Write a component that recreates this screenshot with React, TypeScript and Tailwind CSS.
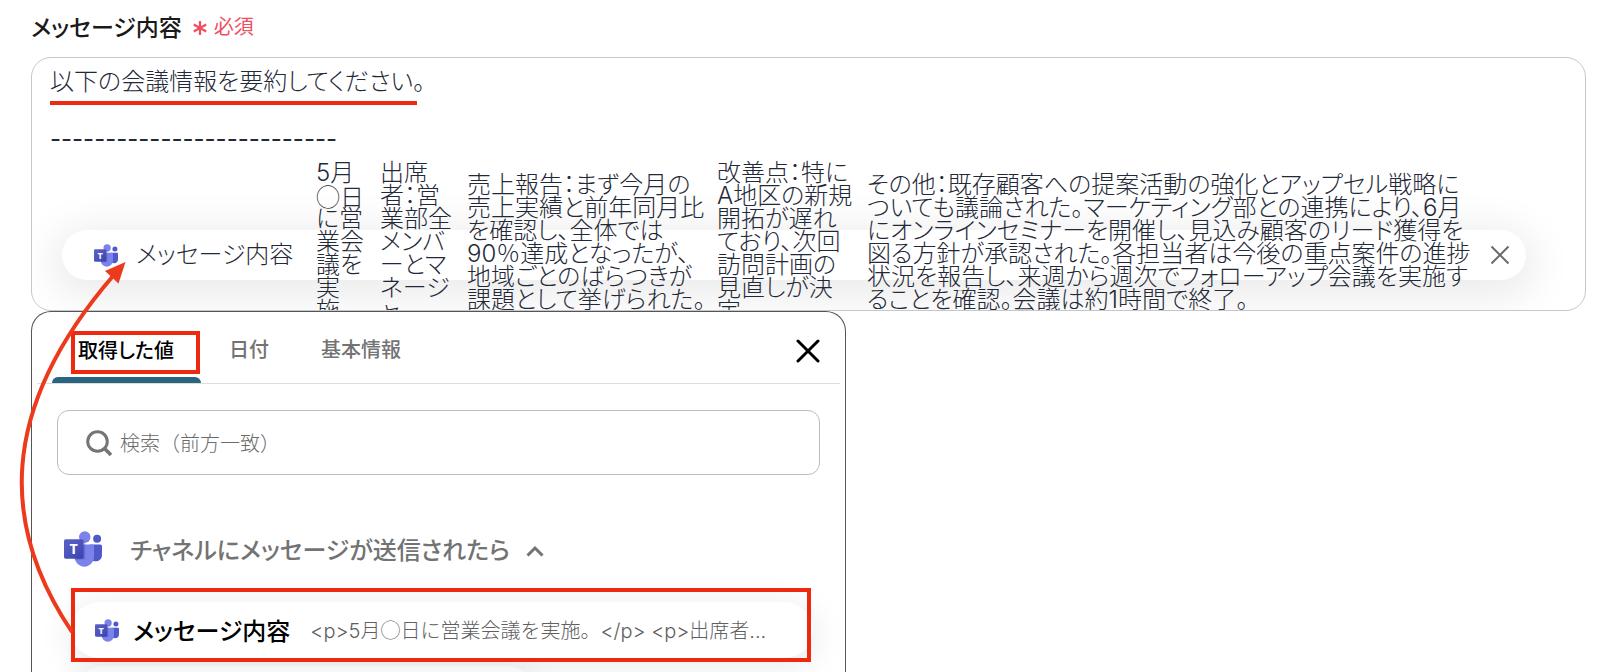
import React from "react";

function TeamsLogo({ className }: { className: string }) {
  return (
    <svg viewBox="0 0 2229 2074" className={className} aria-hidden="true">
      <defs>
        <linearGradient id="teams-tile" x1="0" y1="0" x2="1" y2="1">
          <stop offset="0" stopColor="#5a62c3" />
          <stop offset="0.5" stopColor="#4d55bd" />
          <stop offset="1" stopColor="#3940ab" />
        </linearGradient>
      </defs>
      <path
        fill="#5059c9"
        d="M1554.637 777.5h575.713c54.391 0 98.483 44.092 98.483 98.483v524.398c0 199.901-162.051 361.952-361.952 361.952h-1.711c-199.901.028-361.975-162-362.004-361.901V828.971c0-28.427 23.044-51.471 51.471-51.471z"
      />
      <circle cx="1943.75" cy="440.583" r="233.25" fill="#5059c9" />
      <circle cx="1218.083" cy="336.917" r="336.917" fill="#7b83eb" />
      <path
        fill="#7b83eb"
        d="M1667.323 777.5H717.01c-53.743 1.33-96.257 45.931-95.01 99.676v598.105c-7.505 322.519 247.657 590.16 570.167 598.053 322.51-7.893 577.671-275.534 570.167-598.053V877.176c1.245-53.745-41.268-98.346-95.011-99.676z"
      />
      <path
        fill="#3b42a0"
        opacity="0.35"
        d="M622 560h530a90 90 0 0 1 90 90v910a90 90 0 0 1-90 90H640z"
      />
      <rect y="466.5" width="1140" height="1140" rx="95" fill="url(#teams-tile)" />
      <text
        x="570"
        y="1320"
        textAnchor="middle"
        fill="#ffffff"
        fontSize="840"
        fontWeight="700"
        fontFamily="Open Sans, sans-serif"
      >
        T
      </text>
    </svg>
  );
}

/* Inter's large circle is wider than a kanji, so this one glyph uses the CJK face. */
function Circle() {
  return <span className="font-['Noto_Sans_CJK_JP',sans-serif]">◯</span>;
}

const columns = [
  { size: "h-[188px] w-[46px]", lines: ["5月", "◯日", "に営", "業会", "議を", "実", "施"] },
  { size: "h-[188px] w-[69px]", lines: ["出席", "者：営", "業部全", "メンバ", "ーとマ", "ネージ", "ャ"] },
  {
    size: "h-[165px] w-[232px]",
    lines: [
      "売上報告：まず今月の",
      "売上実績と前年同月比",
      "を確認し、全体では",
      "90％達成となったが、",
      "地域ごとのばらつきが",
      "課題として挙げられた。",
    ],
  },
  {
    size: "h-[188px] w-[132px]",
    lines: ["改善点：特に", "A地区の新規", "開拓が遅れ", "ており、次回", "訪問計画の", "見直しが決", "定"],
  },
  {
    size: "h-[165px] w-[592px]",
    lines: [
      "その他：既存顧客への提案活動の強化とアップセル戦略に",
      "ついても議論された。マーケティング部との連携により、6月",
      "にオンラインセミナーを開催し、見込み顧客のリード獲得を",
      "図る方針が承認された。各担当者は今後の重点案件の進捗",
      "状況を報告し、来週から週次でフォローアップ会議を実施す",
      "ることを確認。会議は約1時間で終了。",
    ],
  },
];

function MessageEditor() {
  return (
    <div
      role="textbox"
      aria-multiline="true"
      aria-labelledby="message-label"
      className="mr-3.5 ml-[31px] h-[254px] shrink-0 overflow-hidden rounded-[20px] border border-[#c3c8ce] pl-[18px] font-[Inter,'Noto_Sans_CJK_JP',sans-serif] text-2xl font-light text-[#1f2937] [font-feature-settings:'palt']"
    >
      <p className="mt-1.5 h-[41px] w-[367px] border-b-4 border-[#ed2a10] leading-[36px] whitespace-nowrap">
        以下の会議情報を要約してください。
      </p>
      <p className="mt-5 leading-[28px] font-normal">--------------------------</p>
      <div className="mt-[77px] ml-3 flex h-[50px] w-[1464px] items-center rounded-full bg-white px-8 shadow-[0_8px_40px_10px_rgba(0,0,0,0.08)]">
        <TeamsLogo className="h-[23px] w-6 shrink-0" />
        <span className="ml-[18px] w-[180px] shrink-0 whitespace-nowrap">メッセージ内容</span>
        <div className="flex items-center gap-[18px] leading-[23px] whitespace-nowrap">
          {columns.map((column) => (
            <div key={column.lines[0]} className={column.size}>
              {column.lines.map((line) => (
                <p key={line} className="h-[23px]">
                  {line.startsWith("◯") && <Circle />}
                  {line.replace("◯", "")}
                </p>
              ))}
            </div>
          ))}
        </div>
        <button type="button" aria-label="削除" className="ml-auto -mr-4 shrink-0 text-[#6b6b6b]">
          <svg viewBox="0 0 20 20" className="size-5" fill="none" stroke="currentColor" strokeWidth="2">
            <path d="M1.500 1.500l17 17M18.500 1.500l-17 17" />
          </svg>
        </button>
      </div>
    </div>
  );
}

function ValuePicker() {
  return (
    <section className="ml-[31px] w-[815px] max-w-full flex-1 overflow-hidden rounded-t-[20px] border border-b-0 border-[#555555] bg-white">
      <div className="mx-[5px] flex h-[72px] items-center border-b border-[#dddddd] text-xl font-medium text-[#737373]">
        <div role="tablist" className="ml-[15px] flex h-full items-start">
          <button
            type="button"
            role="tab"
            aria-selected="true"
            className="flex h-[71px] w-[149px] flex-col justify-between text-black"
          >
            <span className="mt-[19px] ml-[19px] flex h-[43px] w-[129px] items-center border-4 border-[#ed2a10] pb-1.5 pl-[3px] leading-6 whitespace-nowrap [font-feature-settings:'palt']">
              取得した値
            </span>
            <span className="h-1.5 w-full rounded-t-md bg-[#2a657f]" />
          </button>
          <button type="button" role="tab" className="mt-[25px] ml-7 leading-6 [font-feature-settings:'palt']">
            日付
          </button>
          <button type="button" role="tab" className="mt-[25px] ml-[52px] leading-6 [font-feature-settings:'palt']">
            基本情報
          </button>
        </div>
        <button type="button" aria-label="閉じる" className="mt-1.5 mr-5 ml-auto text-black">
          <svg viewBox="0 0 24 24" className="size-6" fill="none" stroke="currentColor" strokeWidth="3" strokeLinecap="round">
            <path d="M2 2l20 20M22 2L2 22" />
          </svg>
        </button>
      </div>

      <label className="mx-[25px] mt-[26px] flex h-[65px] items-center rounded-xl border border-[#bcbcbc] px-7 text-[#757575]">
        <svg viewBox="0 0 26 26" className="size-[26px] shrink-0" fill="none" stroke="currentColor" strokeWidth="3">
          <circle cx="11.500" cy="11.500" r="9.800" />
          <path d="M18.500 18.500l6.500 6.500" strokeWidth="3.500" />
        </svg>
        <input
          type="search"
          aria-label="検索"
          placeholder="検索（前方一致）"
          className="ml-2 w-full text-xl font-light outline-none placeholder:text-[#6b6b6b]"
        />
      </label>

      <button type="button" className="mt-[53px] ml-8 flex h-[42px] items-center text-2xl font-medium text-[#737373]">
        <TeamsLogo className="h-9 w-[38px]" />
        <span className="ml-7 [font-feature-settings:'palt']">チャネルにメッセージが送信されたら</span>
        <svg viewBox="0 0 18 12" className="mt-1 ml-4 h-3 w-[18px]" fill="none" stroke="currentColor" strokeWidth="3">
          <path d="M1.500 10.500L9 3l7.500 7.500" />
        </svg>
      </button>

      <div className="relative mt-8 mr-8 ml-[39px]">
        <button
          type="button"
          className="flex h-14 w-full items-center rounded-full bg-white pl-6 shadow-[0_6px_32px_4px_rgba(0,0,0,0.08)]"
        >
          <TeamsLogo className="h-[23px] w-6 shrink-0" />
          <span className="ml-3.5 text-2xl font-medium text-black [font-feature-settings:'palt']">
            メッセージ内容
          </span>
          <span className="ml-5 font-[Inter,'Noto_Sans_CJK_JP',sans-serif] text-xl font-light whitespace-nowrap text-[#606060]">
            &lt;p&gt;5月
            <Circle />
            日に営業会議を実施。&lt;/p&gt; &lt;p&gt;出席者...
          </span>
        </button>
        <div className="pointer-events-none absolute -top-3.5 right-0.5 -bottom-1 left-0 border-4 border-[#ed2a10]" />
      </div>
      <div className="mt-2 ml-[43px] h-14 w-[460px] rounded-full bg-white shadow-[0_6px_32px_4px_rgba(0,0,0,0.08)]" />
    </section>
  );
}

function PointerArrow() {
  return (
    <svg className="pointer-events-none absolute top-0 left-0 h-[672px] w-40" viewBox="0 0 160 672" aria-hidden="true">
      <path d="M72 632C2 528-4 412 113 276" fill="none" stroke="#ed3a1c" strokeWidth="4" />
      <path d="M125.500 262L105 271l13.500 12.500z" fill="#ed3a1c" />
    </svg>
  );
}

export default function App() {
  return (
    <main className="relative flex h-screen flex-col overflow-hidden bg-white font-['Noto_Sans_CJK_JP',sans-serif]">
      <div className="mt-2 mb-[13px] ml-[31px] flex h-9 shrink-0 items-center">
        <h1 id="message-label" className="text-[23px] leading-9 font-medium text-[#1a1a1a] [font-feature-settings:'palt']">
          メッセージ内容
        </h1>
        <span className="ml-2.5 flex items-center gap-1.5 text-xl leading-6 text-[#f04f5f]">
          <svg viewBox="0 0 16 18" className="mt-1 h-4 w-4" stroke="currentColor" strokeWidth="2.500" aria-hidden="true">
            <path d="M8 1v16M1 5l14 8M15 5L1 13" />
          </svg>
          <span className="[font-feature-settings:'palt']">必須</span>
        </span>
      </div>
      <MessageEditor />
      <ValuePicker />
      <PointerArrow />
    </main>
  );
}
